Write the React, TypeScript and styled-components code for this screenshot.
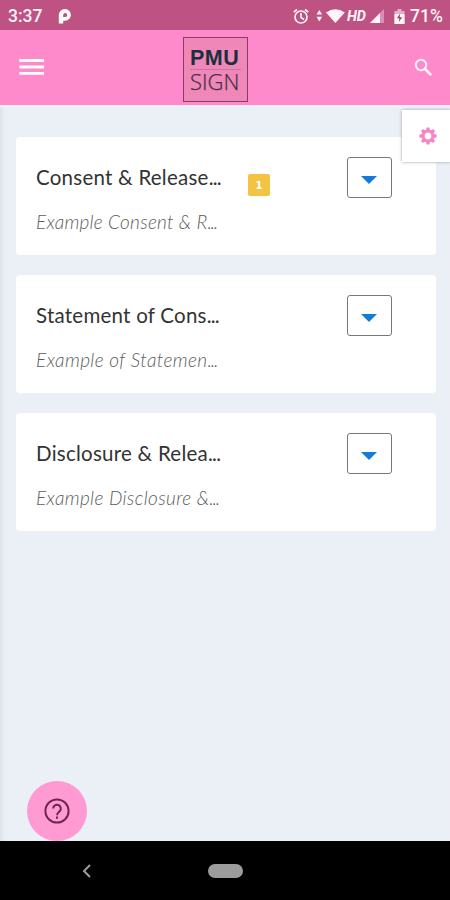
import React from "react";
import styled, { createGlobalStyle } from "styled-components";

const GlobalStyle = createGlobalStyle`
  * { box-sizing: border-box; }
  body { margin: 0; background: #ebeff7; }
  button { padding: 0; border: 0; background: none; font: inherit; }
  svg { display: block; flex: none; }
`;

const Screen = styled.div`
  position: relative;
  display: flex;
  flex-direction: column;
  width: 450px;
  height: 900px;
  overflow: hidden;
  font-family: Lato, "Open Sans", sans-serif;
`;

const StatusBar = styled.div`
  display: flex;
  align-items: center;
  height: 30px;
  padding: 2px 7px 0 8px;
  background: #be5282;
  color: #fff4f8;
  font-family: Roboto, sans-serif;
  font-size: 17.5px;
  font-weight: 500;
`;

const Clock = styled.span`
  width: 50px;
`;

const StatusIcons = styled.div`
  display: flex;
  align-items: center;
  margin-left: auto;
`;

const HdLabel = styled.span`
  width: 22px;
  margin-left: 2px;
  font-size: 14.5px;
  font-style: italic;
  font-weight: 700;
  letter-spacing: -0.3px;
`;

const Battery = styled.span`
  width: 33px;
  margin-left: 5px;
  white-space: nowrap;
`;

const Header = styled.header`
  display: flex;
  justify-content: space-between;
  align-items: center;
  height: 75px;
  padding: 0 17px 0 19px;
  background: #ff8acb;
`;

const IconButton = styled.button`
  flex: none;
`;

const Logo = styled.div`
  display: flex;
  flex-direction: column;
  align-items: center;
  width: 65px;
  height: 65px;
  margin: 4px 28px 0 0;
  padding-top: 8px;
  border: 1.5px solid #883d66;
  background: #ef88b9;
  font-family: "Liberation Sans", sans-serif;
  color: #1c2f3c;
`;

const LogoTop = styled.span`
  width: 51px;
  height: 24px;
  border-bottom: 1px solid #cf74a2;
  font-size: 21.5px;
  font-weight: 700;
  line-height: 24px;
  letter-spacing: 0.5px;
  white-space: nowrap;
`;

const LogoBottom = styled.span`
  width: 51px;
  font-family: "Open Sans", sans-serif;
  font-size: 22px;
  font-weight: 300;
  line-height: 23px;
  color: #4a2d45;
  -webkit-text-stroke: 0.25px #4a2d45;
  white-space: nowrap;
`;

const Content = styled.main`
  position: relative;
  flex: 1;
  display: flex;
  flex-direction: column;
  gap: 20px;
  padding: 31.5px 14.5px 0 15.5px;
  background: linear-gradient(90deg, #d9dde5 0, #e7ebf3 3px, #ebeff6 7px);
  box-shadow: inset 0 2px 2px #f4f0f8;
  overflow: hidden;
`;

const SettingsTab = styled.button`
  position: absolute;
  top: 5px;
  right: -1px;
  display: flex;
  align-items: center;
  justify-content: center;
  width: 49px;
  height: 52px;
  padding-left: 2px;
  background: #fff;
  box-shadow: 0 0 3px #9da0a6;
`;

const Card = styled.article`
  display: grid;
  grid-template-columns: 212px 99px 45px;
  align-items: start;
  height: 118px;
  padding: 20.5px 20px 0 20.5px;
  border-radius: 4px;
  background: #fff;
`;

const Copy = styled.div`
  display: flex;
  flex-direction: column;
  white-space: nowrap;
`;

const Title = styled.h2<{ $spacing: number }>`
  margin: 0;
  font-size: 20.5px;
  font-weight: 400;
  line-height: 40px;
  letter-spacing: ${(p) => p.$spacing}px;
  color: #333;
`;

const Summary = styled.p<{ $spacing: number }>`
  margin: 3px 0 0;
  font-size: 19px;
  font-style: italic;
  font-weight: 300;
  line-height: 44px;
  letter-spacing: ${(p) => p.$spacing}px;
  color: #5c5c5c;
`;

const Dots = styled.span<{ $tight?: boolean }>`
  letter-spacing: ${(p) => (p.$tight ? -1.2 : -0.8)}px;
`;

const Badge = styled.span`
  display: flex;
  align-items: center;
  justify-content: center;
  width: 22px;
  height: 22px;
  margin-top: 17px;
  border-radius: 2px;
  background: #f5c344;
  color: #fff;
  font-family: "DejaVu Sans", sans-serif;
  font-size: 10px;
  font-weight: 700;
`;

const DropButton = styled.button`
  grid-column: 3;
  display: flex;
  align-items: center;
  justify-content: center;
  width: 45px;
  height: 41px;
  padding: 5px 1px 0 0;
  border: 1px solid #777;
  border-radius: 3px;
`;

const HelpButton = styled.button`
  position: absolute;
  left: 26.5px;
  bottom: -0.5px;
  display: flex;
  align-items: center;
  justify-content: center;
  width: 60.5px;
  height: 60.5px;
  border-radius: 50%;
  background: #ff9bd2;
`;

const NavBar = styled.nav`
  display: grid;
  grid-template-columns: 91px 1fr 91px;
  align-items: center;
  height: 59.5px;
  padding-top: 1px;
  background: #000;
`;

const BackButton = styled.button`
  justify-self: end;
  width: 9px;
`;

const HomePill = styled.button`
  justify-self: center;
  width: 35px;
  height: 14px;
  border-radius: 7px;
  background: #9c9c9c;
`;

const documents = [
  { title: "Consent & Release", ts: 0.24, summary: "Example Consent & R", ss: 0.27, badge: "1" },
  { title: "Statement of Cons", ts: 0.24, summary: "Example of Statemen", ss: 0.42 },
  { title: "Disclosure & Relea", ts: 0.25, summary: "Example Disclosure &", ss: 0.37 },
];

const toothAngles = Array.from({ length: 8 }, (_, i) => i * 45);

export default function App() {
  return (
    <Screen>
      <GlobalStyle />
      <StatusBar>
        <Clock>3:37</Clock>
        <svg width="14" height="16" viewBox="0 0 14 16">
          <path
            d="M.8 15.6V7A6 6 0 0 1 7 1a5.8 5.8 0 0 1 0 11.8H5.2v2.8zM5.2 9H7a2 2 0 1 0-1.8-2z"
            fill="#fff"
            fillRule="evenodd"
          />
        </svg>
        <StatusIcons>
          <svg width="16" height="17" viewBox="0 0 16 17" fill="none" stroke="#fff4f8" strokeWidth="1.7">
            <circle cx="8" cy="9" r="6" />
            <path d="M.8 4.2 4 1.5M15.2 4.2 12 1.5M8 5v4.5l3 2" />
          </svg>
          <svg width="36" height="17" viewBox="0 0 36 17" fill="#fff4f8">
            <path d="M7.5 6.5 10.3 2l2.8 4.5zM7.5 8.8h5.6l-2.8 4.7zM17 4.5Q26.4-2.2 35.8 4.5L26.4 15z" />
          </svg>
          <HdLabel>HD</HdLabel>
          <svg width="16" height="16" viewBox="0 0 16 16">
            <path d="M1 15 15 1v14z" fill="#d990b2" />
            <path d="M1 15 11 5V15z" fill="#fff4f8" />
          </svg>
          <svg width="20" height="17" viewBox="0 0 20 17">
            <path d="M9.5 3h3V1h4v2h3v13h-10z" fill="#e3b0c8" />
            <path d="M9.5 6h10v10h-10z" fill="#fff4f8" />
            <path d="m15.2 5.5-3.3 4.8h2.5l-.6 3.7 3.3-4.8h-2.5z" fill="#8f3c63" />
          </svg>
          <Battery>71%</Battery>
        </StatusIcons>
      </StatusBar>
      <Header>
        <IconButton aria-label="Menu">
          <svg width="26" height="18" viewBox="0 0 26 18" stroke="#fff" strokeWidth="2.8">
            <path d="M.3 1.5h24.8M.3 8h24.8M.3 14.3h24.8" />
          </svg>
        </IconButton>
        <Logo>
          <LogoTop>PMU</LogoTop>
          <LogoBottom>SIGN</LogoBottom>
        </Logo>
        <IconButton aria-label="Search">
          <svg width="19" height="19" viewBox="0 0 19 19" fill="none" stroke="#fff4fb">
            <circle cx="7" cy="7" r="5.2" strokeWidth="2" />
            <path d="m11 11 6.2 6.2" strokeWidth="2.6" />
          </svg>
        </IconButton>
      </Header>
      <Content>
        {documents.map((doc) => (
          <Card key={doc.title}>
            <Copy>
              <Title $spacing={doc.ts}>{doc.title}<Dots>...</Dots></Title>
              <Summary $spacing={doc.ss}>{doc.summary}<Dots $tight>...</Dots></Summary>
            </Copy>
            {doc.badge && <Badge>{doc.badge}</Badge>}
            <DropButton aria-label="Open actions">
              <svg width="16" height="8" viewBox="0 0 16 8"><path d="M0 0h16L8 8z" fill="#127cd8" /></svg>
            </DropButton>
          </Card>
        ))}
        <SettingsTab aria-label="Settings">
          <svg width="18" height="18" viewBox="-9 -9 18 18">
            {toothAngles.map((angle) => (
              <path key={angle} d="M-2-5-1.4-8.6h2.8L2-5z" fill="#fa83c5" transform={`rotate(${angle})`} />
            ))}
            <circle r="4.9" fill="none" stroke="#fa83c5" strokeWidth="3" />
          </svg>
        </SettingsTab>
        <HelpButton aria-label="Help">
          <svg width="26" height="26" viewBox="0 0 26 26" fill="none" stroke="#702456" strokeWidth="2">
            <circle cx="13" cy="13" r="11.6" />
            <path d="M9.2 10.6a3.8 3.8 0 1 1 6.5 2.6c-1.5 1.4-2.7 2-2.7 4M13 18.5v2.2" />
          </svg>
        </HelpButton>
      </Content>
      <NavBar>
        <BackButton aria-label="Back">
          <svg width="9" height="14" viewBox="0 0 9 14" fill="none" stroke="#9c9c9c" strokeWidth="2">
            <path d="M8 1 2 7l6 6" />
          </svg>
        </BackButton>
        <HomePill aria-label="Home" />
      </NavBar>
    </Screen>
  );
}
